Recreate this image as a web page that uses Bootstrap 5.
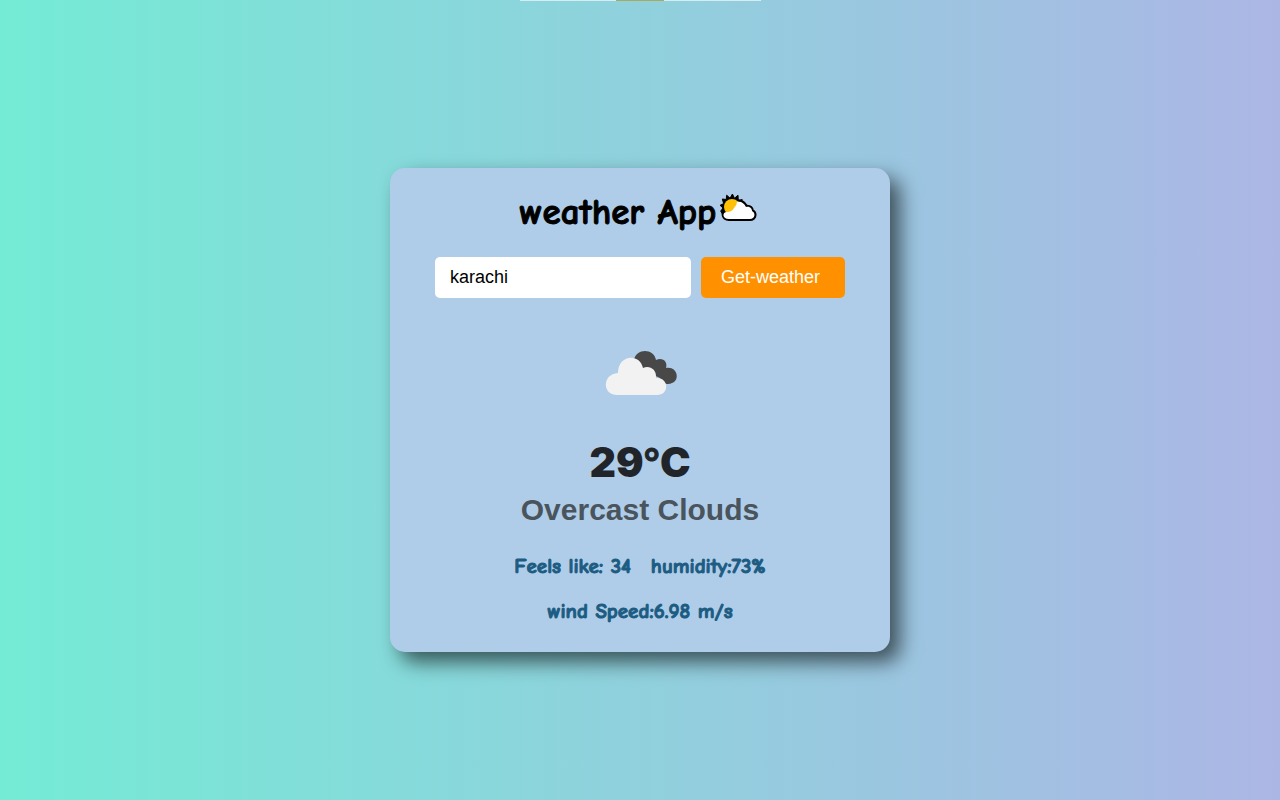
<!DOCTYPE html>
<html lang="en">
<head>
<meta charset="utf-8">
<meta name="viewport" content="width=device-width, initial-scale=1">
<title>weather App</title>
<link href="https://cdn.jsdelivr.net/npm/bootstrap@5.3.0/dist/css/bootstrap.min.css" rel="stylesheet">
<style>
body{font-family:"Liberation Sans",Arial,sans-serif;background:linear-gradient(90deg,#74ebd5,#acb6e5)}
.top-strip{width:241px;height:1px;background:#d3edf1}
.top-strip span{width:48px;height:1px;background:#a9aa5e}
.weather-panel{width:100%;max-width:500px;margin-top:18px;padding:20px 45px 27px;background:#afcde9;border-radius:15px;box-shadow:10px 10px 20px rgba(0,0,0,.6)}
.comic{font-family:"Comic Sans MS","Comic Neue","Noto Sans",sans-serif;font-weight:700;-webkit-text-stroke:1px currentColor}
.app-title{font-size:37px;line-height:48px;color:#000;margin-bottom:21px;padding-right:3px}
.title-icon{margin-bottom:8px}
.city-form{gap:10px}
.city-input{min-width:0;height:41px;padding:0 15px;border:0;border-radius:5px;font-size:18px;color:#000}
.get-btn{width:144px;height:41px;padding:0 20px;border:0;border-radius:5px;background:#ff9100;color:#fff;font-size:18px;text-align:left}
.get-btn:hover{background:#e88300;color:#fff}
.sky-icon{margin-top:25px}
.temp{font-family:"Arial Black",Inter,sans-serif;font-weight:900;font-size:41px;line-height:60px;margin-top:9px;color:#212529}
.degree{font-family:"Liberation Sans",Arial,sans-serif;line-height:1;-webkit-text-stroke:1px currentColor}
.sky{font-size:30px;line-height:36px;font-weight:700;color:#4a545c}
.facts{font-size:21px;line-height:27px;color:#1c5c82;column-gap:20px}
.facts-first{margin-top:25px;margin-bottom:18px}
</style>
</head>
<body class="min-vh-100 d-flex flex-column align-items-center">
<div class="top-strip d-flex justify-content-center"><span></span></div>
<div class="flex-grow-1 w-100 d-flex justify-content-center align-items-center">
<main class="weather-panel text-center">
  <h1 class="app-title comic d-flex justify-content-center align-items-center gap-1"><span>weather App</span><svg class="title-icon" width="37" height="28" viewBox="0 0 37 28" aria-hidden="true">
    <path d="M9 25C2 25 2 17 8 16 12 7 22 4 26 13 30 12 32 15 32 17 36 19 35 25 30 25z" fill="#000" stroke="#000" stroke-width="4" stroke-linejoin="round"/>
    <path d="M3 21 .7 17.1 3 14 .1 11.300 3.700 9.600 2.300 5 6.200 5.500 6.700 1.200 10.100 4.200 12.400 0 14.500 4.300 18 1.200 18.300 6.500 22.200 5.500 20 14z" fill="#000" stroke="#000" stroke-linejoin="round"/>
    <circle cx="12" cy="13" r="8" fill="#ffc107"/>
    <path d="M9 25C2 25 2 18 7 18Q12 18 14 14 17 11 17 8C21 7 24 9 26 13 30 12 32 15 32 17 36 19 35 25 30 25z" fill="#fff"/>
  </svg></h1>
  <form class="city-form d-flex" onsubmit="return false">
    <input id="city" type="text" class="city-input flex-fill" value="karachi" aria-label="City">
    <button class="btn get-btn flex-shrink-0" type="submit">Get-weather</button>
  </form>
  <svg class="sky-icon" width="100" height="100" viewBox="0 0 100 100" role="img" aria-label="Overcast clouds">
    <path d="M44 37C46 25 64 25 66 37 73 34 78 39 76 45 88 43 90 58 82 60 77 63 71 59 70 55L55 48z" fill="#484848"/>
    <path d="M27 72C12 72 12 51 28 50 28 31 50 30 53 45 59 42 67 46 66 55 79 54 80 72 67 72z" fill="#f2f2f2"/>
  </svg>
  <div class="temp">29<span class="degree">°</span>C</div>
  <div class="sky">Overcast Clouds</div>
  <div class="facts facts-first comic d-flex flex-wrap justify-content-center"><span>Feels like: 34</span><span>humidity:73%</span></div>
  <div class="facts comic">wind Speed:6.98 m/s</div>
</main>
</div>
<script src="https://cdn.jsdelivr.net/npm/bootstrap@5.3.0/dist/js/bootstrap.bundle.min.js"></script>
</body>
</html>
